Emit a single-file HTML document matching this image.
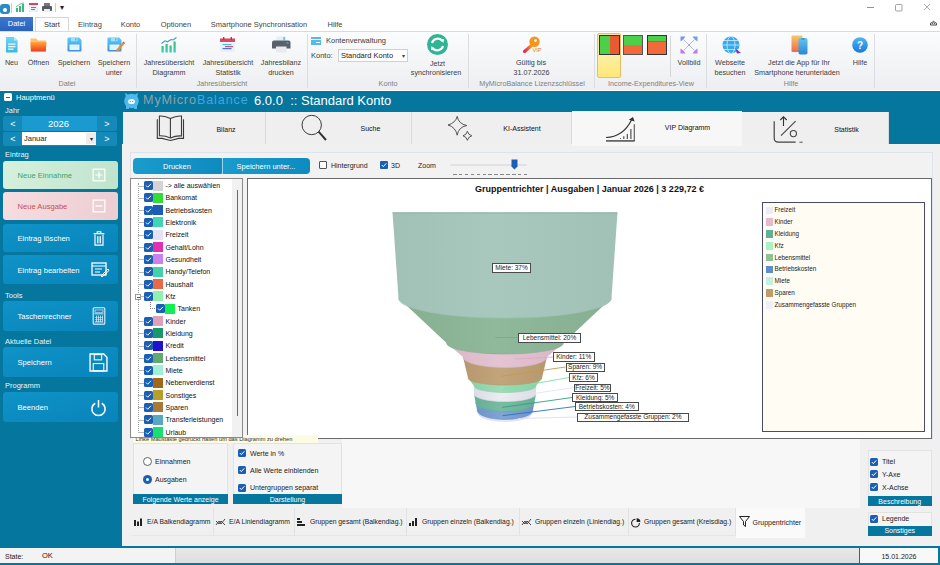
<!DOCTYPE html>
<html><head><meta charset="utf-8">
<style>
html,body{margin:0;padding:0;}
body{width:940px;height:565px;overflow:hidden;position:relative;background:#fff;font-family:"Liberation Sans",sans-serif;}
.t{position:absolute;white-space:nowrap;}
.r{position:absolute;box-sizing:border-box;}
svg.r{overflow:visible;}
</style></head><body>
<div class="r" style="left:0px;top:0px;width:940px;height:31px;background:#fff;"></div>
<svg class="r" style="left:0px;top:2px;" width="12" height="13" viewBox="0 0 12 13"><rect x="0" y="2" width="10" height="10" rx="3" fill="#2a8cc0"/><circle cx="5" cy="8" r="2" fill="#fff"/></svg>
<div class="r" style="left:11px;top:3px;width:1px;height:10px;background:#ccc;"></div>
<svg class="r" style="left:16px;top:3px;" width="9" height="9" viewBox="0 0 9 9"><rect x="0" y="5" width="2" height="4" fill="#3cb87a"/><rect x="3" y="3" width="2" height="6" fill="#3cb87a"/><rect x="6" y="1" width="2" height="8" fill="#3cb87a"/><path d="M0 4 L4 1 L8 0" stroke="#3cb87a" fill="none" stroke-width="0.8"/></svg>
<svg class="r" style="left:29px;top:3px;" width="9" height="9" viewBox="0 0 9 9"><rect x="0" y="1" width="9" height="8" fill="#e8f0fa"/><rect x="0" y="0" width="9" height="2" fill="#e04060"/><rect x="2" y="4" width="5" height="1" fill="#5080e0"/><rect x="2" y="6" width="4" height="1" fill="#e05080"/></svg>
<svg class="r" style="left:42px;top:3px;" width="10" height="9" viewBox="0 0 10 9"><rect x="0" y="3" width="10" height="5" rx="1" fill="#555a66"/><rect x="2" y="0" width="6" height="3" fill="#777"/><rect x="2" y="6" width="6" height="3" fill="#eee"/></svg>
<div class="r" style="left:55px;top:3px;width:1px;height:9px;background:#ccc;"></div>
<div class="t" style="left:60px;top:4.16px;font-size:8px;line-height:8px;color:#222;">▾</div>
<svg class="r" style="left:866px;top:3px;" width="70" height="9" viewBox="0 0 70 9"><path d="M1 4.5 H8" stroke="#888" stroke-width="0.9"/><rect x="29.5" y="1.5" width="6.5" height="6.5" rx="1" fill="none" stroke="#999" stroke-width="0.9"/><path d="M58 1 L64 7 M64 1 L58 7" stroke="#aaa" stroke-width="0.9"/></svg>
<div class="r" style="left:0px;top:17px;width:33px;height:14px;background:linear-gradient(#3a78d0,#2a62bc);"></div>
<div class="t" style="left:-3.5px;width:40px;text-align:center;top:20.40px;font-size:7.5px;line-height:7.5px;color:#fff;">Datei</div>
<div class="r" style="left:35px;top:17px;width:34px;height:15px;background:#fff;border:1px solid #d6d6d6;border-bottom:none;box-sizing:border-box;"></div>
<div class="t" style="left:32.0px;width:40px;text-align:center;top:20.90px;font-size:7.5px;line-height:7.5px;color:#333;">Start</div>
<div class="t" style="left:-10.0px;width:200px;text-align:center;top:20.90px;font-size:7.5px;line-height:7.5px;color:#444;">Eintrag</div>
<div class="t" style="left:30.5px;width:200px;text-align:center;top:20.90px;font-size:7.5px;line-height:7.5px;color:#444;">Konto</div>
<div class="t" style="left:76.0px;width:200px;text-align:center;top:20.90px;font-size:7.5px;line-height:7.5px;color:#444;">Optionen</div>
<div class="t" style="left:159.0px;width:200px;text-align:center;top:20.90px;font-size:7.5px;line-height:7.5px;color:#444;">Smartphone Synchronisation</div>
<div class="t" style="left:235.0px;width:200px;text-align:center;top:20.90px;font-size:7.5px;line-height:7.5px;color:#444;">Hilfe</div>
<svg class="r" style="left:930px;top:20px;" width="7" height="6" viewBox="0 0 7 6"><path d="M0.5 5 Q0 2.5 2 2.5 Q3.5 0 5 2.5 Q7 2.5 6.5 5 Z" fill="none" stroke="#333" stroke-width="0.9"/><path d="M2 4 L3.5 2.7 L5 4" stroke="#333" stroke-width="0.8" fill="none"/></svg>
<div class="r" style="left:0px;top:31px;width:940px;height:59px;background:linear-gradient(#fbfcfd,#eceef1);border-top:1px solid #d8dadd;box-sizing:border-box;"></div>
<div class="r" style="left:136px;top:34px;width:1px;height:54px;background:#dcdde0;"></div>
<div class="r" style="left:307px;top:34px;width:1px;height:54px;background:#dcdde0;"></div>
<div class="r" style="left:468px;top:34px;width:1px;height:54px;background:#dcdde0;"></div>
<div class="r" style="left:594px;top:34px;width:1px;height:54px;background:#dcdde0;"></div>
<div class="r" style="left:706px;top:34px;width:1px;height:54px;background:#dcdde0;"></div>
<div class="r" style="left:874px;top:34px;width:1px;height:54px;background:#dcdde0;"></div>
<svg class="r" style="left:5px;top:36.5px;" width="13" height="16" viewBox="0 0 13 16"><defs><linearGradient id="gneu" x1="0" x2="0" y1="0" y2="1"><stop offset="0" stop-color="#6fd6f4"/><stop offset="1" stop-color="#3cb4e6"/></linearGradient></defs><path d="M1 0 H9 L12.5 3.5 V15.5 H1 Z" fill="url(#gneu)"/><path d="M9 0 V3.5 H12.5" fill="#b8ecfb"/><rect x="3" y="6.5" width="7.5" height="1.3" fill="#e6f8fe"/><rect x="3" y="9" width="7.5" height="1.3" fill="#e6f8fe"/><rect x="3" y="11.5" width="5.5" height="1.3" fill="#e6f8fe"/></svg>
<div class="t" style="left:-88.5px;width:200px;text-align:center;top:59.04px;font-size:7.2px;line-height:7.2px;color:#3c3c3c;">Neu</div>
<svg class="r" style="left:29.5px;top:37.5px;" width="17" height="14" viewBox="0 0 17 14"><defs><linearGradient id="gfold" x1="0" x2="0" y1="0" y2="1"><stop offset="0" stop-color="#ffa838"/><stop offset="1" stop-color="#ee3c1c"/></linearGradient></defs><path d="M0.5 0.5 H6 L8 2.5 H16 V13.5 H0.5 Z" fill="#ffc070"/><path d="M0.5 4 H16.5 L15.8 13.5 H1 Z" fill="url(#gfold)"/></svg>
<div class="t" style="left:-61.5px;width:200px;text-align:center;top:59.04px;font-size:7.2px;line-height:7.2px;color:#3c3c3c;">Öffnen</div>
<svg class="r" style="left:66.5px;top:37px;" width="15" height="15" viewBox="0 0 15 15"><defs><linearGradient id="gdisk" x1="0" x2="0" y1="0" y2="1"><stop offset="0" stop-color="#5ccdf2"/><stop offset="1" stop-color="#3f8ee0"/></linearGradient></defs><path d="M0.5 1.5 Q0.5 0.5 1.5 0.5 H12 L14.5 3 V13.5 Q14.5 14.5 13.5 14.5 H1.5 Q0.5 14.5 0.5 13.5 Z" fill="url(#gdisk)"/><rect x="4" y="0.5" width="6.5" height="3.8" fill="#9fe2f8"/><rect x="8" y="1.2" width="1.4" height="2.4" fill="#4fb8e8"/><rect x="2.5" y="7.5" width="10" height="5.5" fill="#dff4fc"/></svg>
<div class="t" style="left:-26.0px;width:200px;text-align:center;top:59.04px;font-size:7.2px;line-height:7.2px;color:#3c3c3c;">Speichern</div>
<svg class="r" style="left:106.5px;top:37px;" width="18" height="15" viewBox="0 0 18 15"><defs><linearGradient id="gdisk2" x1="0" x2="0" y1="0" y2="1"><stop offset="0" stop-color="#5ccdf2"/><stop offset="1" stop-color="#3f8ee0"/></linearGradient></defs><path d="M0.5 1.5 Q0.5 0.5 1.5 0.5 H12 L14.5 3 V13.5 Q14.5 14.5 13.5 14.5 H1.5 Q0.5 14.5 0.5 13.5 Z" fill="url(#gdisk2)"/><rect x="4" y="0.5" width="6.5" height="3.8" fill="#9fe2f8"/><rect x="8" y="1.2" width="1.4" height="2.4" fill="#4fb8e8"/><rect x="2.5" y="7.5" width="10" height="5.5" fill="#dff4fc"/><path d="M9.5 12.5 L15.5 5.5 L17.3 7 L11.3 14 L9.2 14.6 Z" fill="#f08a30"/><path d="M15.5 5.5 L16.3 4.6 L18 6.1 L17.3 7 Z" fill="#e03a50"/></svg>
<div class="t" style="left:14.0px;width:200px;text-align:center;top:59.04px;font-size:7.2px;line-height:7.2px;color:#3c3c3c;">Speichern</div>
<div class="t" style="left:14.0px;width:200px;text-align:center;top:68.54px;font-size:7.2px;line-height:7.2px;color:#3c3c3c;">unter</div>
<div class="t" style="left:-33.0px;width:200px;text-align:center;top:79.54px;font-size:7.2px;line-height:7.2px;color:#7c7f84;">Datei</div>
<svg class="r" style="left:160.5px;top:36.5px;" width="16" height="16" viewBox="0 0 16 16"><defs><linearGradient id="gbar" x1="0" x2="0" y1="0" y2="1"><stop offset="0" stop-color="#3cc07a"/><stop offset="1" stop-color="#34c8c0"/></linearGradient></defs><rect x="0.5" y="9" width="2.2" height="6.5" fill="url(#gbar)"/><rect x="4.5" y="7" width="2.2" height="8.5" fill="url(#gbar)"/><rect x="8.5" y="8.5" width="2.2" height="7" fill="url(#gbar)"/><rect x="12.5" y="4.5" width="2.2" height="11" fill="url(#gbar)"/><path d="M0.5 6.5 L4 3.8 L6.5 4.8 L10 2.5 L12 3 L15.5 0.5" stroke="#3a9ad0" stroke-width="1.1" fill="none"/></svg>
<div class="t" style="left:69.0px;width:200px;text-align:center;top:59.04px;font-size:7.2px;line-height:7.2px;color:#3c3c3c;">Jahresübersicht</div>
<div class="t" style="left:69.0px;width:200px;text-align:center;top:68.54px;font-size:7.2px;line-height:7.2px;color:#3c3c3c;">Diagramm</div>
<svg class="r" style="left:220px;top:36.5px;" width="15" height="15" viewBox="0 0 15 15"><rect x="0" y="1.5" width="15" height="13.5" fill="#e6f3fb"/><rect x="0" y="1.5" width="15" height="3.5" fill="#e0465e"/><rect x="3" y="0" width="1.4" height="2.8" fill="#b83048"/><rect x="10.6" y="0" width="1.4" height="2.8" fill="#b83048"/><rect x="2.5" y="7" width="9" height="1.2" fill="#48c0e8"/><rect x="5" y="9" width="8" height="1.2" fill="#e05070"/><rect x="2.5" y="11" width="9" height="1.2" fill="#5070e0"/></svg>
<div class="t" style="left:128.0px;width:200px;text-align:center;top:59.04px;font-size:7.2px;line-height:7.2px;color:#3c3c3c;">Jahresübersicht</div>
<div class="t" style="left:128.0px;width:200px;text-align:center;top:68.54px;font-size:7.2px;line-height:7.2px;color:#3c3c3c;">Statistik</div>
<svg class="r" style="left:272px;top:36px;" width="18.5" height="17" viewBox="0 0 18.5 17"><rect x="4.5" y="0.5" width="9.5" height="5" fill="#dff0f8"/><rect x="11.5" y="1" width="1.2" height="3" fill="#40b0d0"/><path d="M0 6.5 Q0 4.5 2 4.5 H16.5 Q18.5 4.5 18.5 6.5 V12.5 H0 Z" fill="#5c606c"/><rect x="14.5" y="6.5" width="2" height="1" fill="#50c0e0"/><rect x="4" y="10.5" width="10.5" height="6" fill="#e8eaee"/></svg>
<div class="t" style="left:181.0px;width:200px;text-align:center;top:59.04px;font-size:7.2px;line-height:7.2px;color:#3c3c3c;">Jahresbilanz</div>
<div class="t" style="left:181.0px;width:200px;text-align:center;top:68.54px;font-size:7.2px;line-height:7.2px;color:#3c3c3c;">drucken</div>
<div class="t" style="left:122.0px;width:200px;text-align:center;top:79.54px;font-size:7.2px;line-height:7.2px;color:#7c7f84;">Jahresübersicht</div>
<svg class="r" style="left:311px;top:37px;" width="10" height="8" viewBox="0 0 10 8"><rect x="0" y="0" width="10" height="8" fill="#5ab8e8"/><rect x="0" y="2" width="10" height="1" fill="#fff"/><rect x="5" y="5" width="4" height="1" fill="#fff"/></svg>
<div class="t" style="left:326px;top:37.40px;font-size:7.5px;line-height:7.5px;color:#3c3c3c;">Kontenverwaltung</div>
<div class="t" style="left:311px;top:51.90px;font-size:7.5px;line-height:7.5px;color:#3c3c3c;">Konto:</div>
<div class="r" style="left:338px;top:49px;width:70px;height:13px;background:#fff;border:1px solid #d0d0d0;box-sizing:border-box;"></div>
<div class="t" style="left:341px;top:51.90px;font-size:7.5px;line-height:7.5px;color:#222;">Standard Konto</div>
<div class="t" style="left:398.0px;width:10px;text-align:center;top:52.62px;font-size:6px;line-height:6px;color:#444;">▾</div>
<svg class="r" style="left:427px;top:34px;" width="21" height="21" viewBox="0 0 21 21"><circle cx="10.5" cy="10.5" r="10.5" fill="#2fb594"/><path d="M5 9 A6 6 0 0 1 15.5 7" stroke="#fff" stroke-width="2.2" fill="none"/><path d="M16 12 A6 6 0 0 1 5.5 14" stroke="#fff" stroke-width="2.2" fill="none"/><path d="M13 5 L17 5 L16.5 9 Z" fill="#fff"/><path d="M8 16 L4 16 L4.5 12 Z" fill="#fff"/></svg>
<div class="t" style="left:337.5px;width:200px;text-align:center;top:59.54px;font-size:7.2px;line-height:7.2px;color:#3c3c3c;">Jetzt</div>
<div class="t" style="left:336.0px;width:200px;text-align:center;top:69.04px;font-size:7.2px;line-height:7.2px;color:#3c3c3c;">synchronisieren</div>
<div class="t" style="left:288.0px;width:200px;text-align:center;top:79.54px;font-size:7.2px;line-height:7.2px;color:#7c7f84;">Konto</div>
<svg class="r" style="left:521px;top:36px;" width="20" height="17" viewBox="0 0 20 17"><defs><linearGradient id="gkey" x1="1" x2="0" y1="0" y2="1"><stop offset="0" stop-color="#f8a020"/><stop offset="1" stop-color="#e8204a"/></linearGradient></defs><path d="M11 9 L3.5 15.5" stroke="url(#gkey)" stroke-width="3" stroke-linecap="round"/><circle cx="13.5" cy="5.8" r="5.2" fill="#f7941e"/><circle cx="14.5" cy="4.6" r="1.4" fill="#fff4d8"/><text x="11.5" y="16" font-size="5.5" fill="#d07a40" font-family="Liberation Sans">VIP</text></svg>
<div class="t" style="left:431.0px;width:200px;text-align:center;top:59.04px;font-size:7.2px;line-height:7.2px;color:#3c3c3c;">Gültig bis</div>
<div class="t" style="left:431.5px;width:200px;text-align:center;top:68.54px;font-size:7.2px;line-height:7.2px;color:#3c3c3c;">31.07.2026</div>
<div class="t" style="left:432.0px;width:200px;text-align:center;top:79.54px;font-size:7.2px;line-height:7.2px;color:#7c7f84;">MyMicroBalance Lizenzschlüssel</div>
<div class="r" style="left:597px;top:33px;width:24px;height:45px;background:linear-gradient(#fbe7a0,#fdeea8 45%,#ffe878);border:1px solid #e6c060;border-radius:2px;box-sizing:border-box;"></div>
<svg class="r" style="left:599px;top:35px;" width="21" height="20" viewBox="0 0 21 20"><rect x="0" y="0" width="21" height="20" fill="#333"/><rect x="1" y="1" width="10" height="18" fill="#4cd04a"/><rect x="11" y="1" width="9" height="18" fill="#e85a30"/></svg>
<svg class="r" style="left:623px;top:35px;" width="20" height="20" viewBox="0 0 20 20"><rect x="0" y="0" width="20" height="20" fill="#555"/><rect x="1" y="1" width="18" height="9" fill="#4cd04a"/><rect x="1" y="10" width="18" height="9" fill="#f26a3a"/></svg>
<svg class="r" style="left:647px;top:35px;" width="20" height="20" viewBox="0 0 20 20"><rect x="0" y="0" width="20" height="20" fill="#333"/><rect x="1" y="1" width="18" height="5.5" fill="#4cd04a"/><rect x="1" y="6.5" width="18" height="12.5" fill="#f26a3a"/></svg>
<div class="r" style="left:670px;top:36px;width:1px;height:41px;background:#d4d6da;"></div>
<svg class="r" style="left:680px;top:36px;" width="18" height="18" viewBox="0 0 18 18"><path d="M3.5 3.5 L14.5 14.5 M14.5 3.5 L3.5 14.5" stroke="#a8a8e8" stroke-width="0.8"/><circle cx="9" cy="9" r="0.9" fill="#a0a0e0"/><path d="M0.5 0.5 H5.5 L4 2.5 L2.5 4 L0.5 5.5 Z" fill="#7a98e6"/><path d="M17.5 0.5 H12.5 L14 2.5 L15.5 4 L17.5 5.5 Z" fill="#7a98e6"/><path d="M0.5 17.5 H5.5 L4 15.5 L2.5 14 L0.5 12.5 Z" fill="#c078e6"/><path d="M17.5 17.5 H12.5 L14 15.5 L15.5 14 L17.5 12.5 Z" fill="#c078e6"/></svg>
<div class="t" style="left:589.0px;width:200px;text-align:center;top:59.04px;font-size:7.2px;line-height:7.2px;color:#3c3c3c;">Vollbild</div>
<div class="t" style="left:551.0px;width:200px;text-align:center;top:79.54px;font-size:7.2px;line-height:7.2px;color:#7c7f84;">Income-Expenditures-View</div>
<svg class="r" style="left:722px;top:36px;" width="19" height="18" viewBox="0 0 19 18"><circle cx="9" cy="9" r="8.5" fill="#3aa8e8"/><ellipse cx="9" cy="9" rx="4" ry="8.5" fill="none" stroke="#bfe6fb" stroke-width="0.9"/><path d="M0.5 9 H17.5 M2 4.5 H16 M2 13.5 H16" stroke="#bfe6fb" stroke-width="0.9"/><path d="M13 12 L19 17 L15 17.5 Z" fill="#6a3ac8"/></svg>
<div class="t" style="left:630.0px;width:200px;text-align:center;top:59.04px;font-size:7.2px;line-height:7.2px;color:#3c3c3c;">Webseite</div>
<div class="t" style="left:630.0px;width:200px;text-align:center;top:68.54px;font-size:7.2px;line-height:7.2px;color:#3c3c3c;">besuchen</div>
<svg class="r" style="left:791px;top:35px;" width="17" height="20" viewBox="0 0 17 20"><defs><linearGradient id="gph1" x1="0" x2="0" y1="0" y2="1"><stop offset="0" stop-color="#f8c868"/><stop offset="1" stop-color="#ef6a4a"/></linearGradient><linearGradient id="gph2" x1="0" x2="0" y1="0" y2="1"><stop offset="0" stop-color="#62c6f2"/><stop offset="1" stop-color="#2a86d6"/></linearGradient></defs><rect x="0.5" y="0.5" width="11" height="16.5" rx="1" fill="url(#gph1)"/><rect x="7.5" y="3" width="9" height="16.5" rx="1.8" fill="url(#gph2)"/><rect x="10.5" y="3.6" width="3" height="0.8" fill="#1a5aa0"/></svg>
<div class="t" style="left:699.0px;width:200px;text-align:center;top:59.04px;font-size:7.2px;line-height:7.2px;color:#3c3c3c;">Jetzt die App für Ihr</div>
<div class="t" style="left:697.0px;width:200px;text-align:center;top:68.54px;font-size:7.2px;line-height:7.2px;color:#3c3c3c;">Smartphone herunterladen</div>
<svg class="r" style="left:852px;top:37px;" width="16" height="16" viewBox="0 0 16 16"><defs><linearGradient id="ghelp" x1="0" x2="0" y1="0" y2="1"><stop offset="0" stop-color="#4ab8f4"/><stop offset="1" stop-color="#1a7ad8"/></linearGradient></defs><circle cx="8" cy="8" r="7.8" fill="url(#ghelp)"/><text x="8" y="11.8" font-size="10" fill="#fff" text-anchor="middle" font-family="Liberation Sans" font-weight="bold">?</text></svg>
<div class="t" style="left:760.0px;width:200px;text-align:center;top:59.04px;font-size:7.2px;line-height:7.2px;color:#3c3c3c;">Hilfe</div>
<div class="t" style="left:691.0px;width:200px;text-align:center;top:79.54px;font-size:7.2px;line-height:7.2px;color:#7c7f84;">Hilfe</div>
<div class="r" style="left:0px;top:90.5px;width:940px;height:456.5px;background:#05769e;"></div>
<div class="r" style="left:4px;top:93px;width:8px;height:8px;background:#fff;border-radius:1.5px;"></div>
<div class="r" style="left:6px;top:96.5px;width:4px;height:1px;background:#0e7397;"></div>
<div class="t" style="left:16px;top:93.90px;font-size:7.5px;line-height:7.5px;color:#fff;">Hauptmenü</div>
<div class="t" style="left:5px;top:106.90px;font-size:7.5px;line-height:7.5px;color:#e8f4f8;">Jahr</div>
<div class="r" style="left:3px;top:116px;width:114px;height:15px;background:#1589b7;border-radius:2px;"></div>
<div class="r" style="left:22px;top:116px;width:75px;height:15px;background:#1a9ad0;"></div>
<div class="t" style="left:3.0px;width:20px;text-align:center;top:119.68px;font-size:9px;line-height:9px;color:#fff;">&lt;</div>
<div class="t" style="left:97.0px;width:20px;text-align:center;top:119.68px;font-size:9px;line-height:9px;color:#fff;">&gt;</div>
<div class="t" style="left:28.5px;width:60px;text-align:center;top:119.44px;font-size:9.5px;line-height:9.5px;color:#fff;">2026</div>
<div class="r" style="left:3px;top:132px;width:114px;height:13.5px;background:#1589b7;border-radius:2px;"></div>
<div class="r" style="left:21.5px;top:132px;width:74.5px;height:13px;background:#fff;"></div>
<div class="r" style="left:86px;top:133px;width:10px;height:11px;background:#ececec;"></div>
<div class="t" style="left:86.0px;width:10px;text-align:center;top:136.12px;font-size:6px;line-height:6px;color:#222;">▾</div>
<div class="t" style="left:24px;top:135.40px;font-size:7.5px;line-height:7.5px;color:#222;">Januar</div>
<div class="t" style="left:3.0px;width:20px;text-align:center;top:135.18px;font-size:9px;line-height:9px;color:#fff;">&lt;</div>
<div class="t" style="left:97.0px;width:20px;text-align:center;top:135.18px;font-size:9px;line-height:9px;color:#fff;">&gt;</div>
<div class="t" style="left:5px;top:151.40px;font-size:7.5px;line-height:7.5px;color:#e8f4f8;">Eintrag</div>
<div class="r" style="left:3px;top:161px;width:114.5px;height:28px;background:linear-gradient(100deg,#d6f1de,#bfe3cc);border-radius:3px;"></div>
<div class="t" style="left:17.5px;top:172.35px;font-size:7.6px;line-height:7.6px;color:#3fa35e;">Neue Einnahme</div>
<svg class="r" style="left:91.5px;top:168.0px;" width="14" height="14" viewBox="0 0 18 18"><rect x="1.5" y="1.5" width="15" height="15" fill="none" stroke="#fff" stroke-width="1.6"/><path d="M9 4.5 V13.5 M4.5 9 H13.5" stroke="#fff" stroke-width="1.6"/></svg>
<div class="r" style="left:3px;top:192px;width:114.5px;height:28px;background:linear-gradient(100deg,#f6dde0,#eccdd1);border-radius:3px;"></div>
<div class="t" style="left:17.5px;top:203.35px;font-size:7.6px;line-height:7.6px;color:#c8504e;">Neue Ausgabe</div>
<svg class="r" style="left:91.5px;top:199.0px;" width="14" height="14" viewBox="0 0 18 18"><rect x="1.5" y="1.5" width="15" height="15" fill="none" stroke="#fff" stroke-width="1.6"/><path d="M4.5 9 H13.5" stroke="#fff" stroke-width="1.6"/></svg>
<div class="r" style="left:3px;top:224px;width:114.5px;height:28px;background:linear-gradient(165deg,#0f93c8,#0884b9);border-radius:3px;"></div>
<div class="t" style="left:17.5px;top:235.35px;font-size:7.6px;line-height:7.6px;color:#fff;">Eintrag löschen</div>
<svg class="r" style="left:90.5px;top:230.0px;" width="16" height="16" viewBox="0 0 18 18"><path d="M3 4 H15 M7 4 V2 H11 V4" stroke="#fff" stroke-width="1.3" fill="none"/><path d="M4.5 5 V17 H13.5 V5" stroke="#fff" stroke-width="1.3" fill="none"/><path d="M7.3 7 V15 M9 7 V15 M10.7 7 V15" stroke="#fff" stroke-width="1"/></svg>
<div class="r" style="left:3px;top:255px;width:114.5px;height:28.5px;background:linear-gradient(165deg,#0f93c8,#0884b9);border-radius:3px;"></div>
<div class="t" style="left:17.5px;top:266.60px;font-size:7.6px;line-height:7.6px;color:#fff;">Eintrag bearbeiten</div>
<svg class="r" style="left:90.5px;top:260.25px;" width="18" height="18" viewBox="0 0 18 18"><rect x="1" y="3" width="14" height="12" fill="none" stroke="#fff" stroke-width="1.3"/><path d="M1 6 H15 M4 9 H11 M4 12 H9" stroke="#fff" stroke-width="1"/><path d="M10 16 L17 9 L18 10.5 L11 17 Z" fill="none" stroke="#fff" stroke-width="1"/></svg>
<div class="t" style="left:5px;top:291.90px;font-size:7.5px;line-height:7.5px;color:#e8f4f8;">Tools</div>
<div class="r" style="left:3px;top:301px;width:114.5px;height:30px;background:linear-gradient(165deg,#0f93c8,#0884b9);border-radius:3px;"></div>
<div class="t" style="left:17.5px;top:313.35px;font-size:7.6px;line-height:7.6px;color:#fff;">Taschenrechner</div>
<svg class="r" style="left:89.5px;top:307.0px;" width="18" height="18" viewBox="0 0 18 18"><rect x="3.2" y="0.8" width="11.6" height="16.4" rx="1" fill="none" stroke="#dff4fb" stroke-width="1.1"/><rect x="5" y="3" width="8" height="2.2" fill="#0a6ea0" stroke="#dff4fb" stroke-width="0.7"/><path d="M4.5 6.8 H13.5" stroke="#dff4fb" stroke-width="0.9"/><path d="M6.5 8.5 V15 M8.5 8.5 V15 M10.5 8.5 V15 M12.5 8.5 V15" stroke="#cdebf6" stroke-width="0.9" opacity="0.9"/><path d="M5 10.5 H13 M5 12.5 H13 M5 14.5 H13" stroke="#cdebf6" stroke-width="0.7" opacity="0.8"/><path d="M4.5 15.8 H13.5" stroke="#dff4fb" stroke-width="0.6"/></svg>
<div class="t" style="left:5px;top:337.90px;font-size:7.5px;line-height:7.5px;color:#e8f4f8;">Aktuelle Datei</div>
<div class="r" style="left:3px;top:347px;width:114.5px;height:30px;background:linear-gradient(165deg,#0f93c8,#0884b9);border-radius:3px;"></div>
<div class="t" style="left:17.5px;top:359.35px;font-size:7.6px;line-height:7.6px;color:#fff;">Speichern</div>
<svg class="r" style="left:89.0px;top:352.5px;" width="19" height="19" viewBox="0 0 18 18"><path d="M1 1 H14 L17 4 V17 H1 Z" fill="none" stroke="#fff" stroke-width="1.3"/><rect x="5" y="1.5" width="7" height="5" fill="none" stroke="#fff" stroke-width="1"/><rect x="4" y="10" width="10" height="7" fill="none" stroke="#fff" stroke-width="1"/></svg>
<div class="t" style="left:5px;top:382.40px;font-size:7.5px;line-height:7.5px;color:#e8f4f8;">Programm</div>
<div class="r" style="left:3px;top:392px;width:114.5px;height:30px;background:linear-gradient(165deg,#0f93c8,#0884b9);border-radius:3px;"></div>
<div class="t" style="left:17.5px;top:404.35px;font-size:7.6px;line-height:7.6px;color:#fff;">Beenden</div>
<svg class="r" style="left:90.0px;top:398.5px;" width="17" height="17" viewBox="0 0 18 18"><path d="M5.5 4.5 A7 7 0 1 0 12.5 4.5" stroke="#fff" stroke-width="1.6" fill="none"/><path d="M9 1 V9" stroke="#fff" stroke-width="1.6"/></svg>
<svg class="r" style="left:123px;top:92px;" width="17" height="17" viewBox="0 0 17 17"><circle cx="8.5" cy="9" r="7.3" fill="#4fb8ec"/><path d="M2 1 L6 3 L3 6 Z M15 1 L11 3 L14 6 Z" fill="#4fb8ec"/><rect x="3" y="13" width="3" height="4" fill="#4fb8ec"/><rect x="11" y="13" width="3" height="4" fill="#4fb8ec"/><ellipse cx="8.5" cy="9.5" rx="3.4" ry="2.6" fill="#fff"/><circle cx="7.3" cy="9.5" r="0.7" fill="#4fb8ec"/><circle cx="9.7" cy="9.5" r="0.7" fill="#4fb8ec"/></svg>
<div class="t" style="left:143px;top:93px;font-size:12.6px;line-height:14px;letter-spacing:0.9px;"><span style="color:#8ea3ab">MyMicro</span><span style="color:#3aa9e0">Balance</span></div>
<div class="t" style="left:254px;top:94.26px;font-size:13px;line-height:13px;color:#fff;">6.0.0&nbsp; :: Standard Konto</div>
<div class="r" style="left:122px;top:144px;width:818px;height:401.5px;background:#f0f0f0;"></div>
<div class="r" style="left:123px;top:112px;width:143px;height:32px;background:#efefef;border-right:1px solid #dadada;"></div>
<div class="r" style="left:266px;top:112px;width:146px;height:32px;background:#efefef;border-right:1px solid #dadada;"></div>
<div class="r" style="left:412px;top:112px;width:160px;height:32px;background:#efefef;border-right:1px solid #dadada;"></div>
<div class="r" style="left:572px;top:110.5px;width:170px;height:35px;background:#f7f7f7;"></div>
<div class="r" style="left:742px;top:112px;width:147px;height:32px;background:#efefef;border-right:1px solid #dadada;"></div>
<svg class="r" style="left:150px;top:110px;" width="45" height="36" viewBox="0 0 45 36"><path d="M9.4 6 Q15 5.5 20.4 8.5 Q26 5.5 31.5 6 V26 Q26 25.5 20.4 28 Q15 25.5 9.4 25.8 Z" fill="none" stroke="#3a3a3a" stroke-width="1.1"/><path d="M20.4 8.5 V28" stroke="#3a3a3a" stroke-width="1.1"/><path d="M7.3 9.2 V28.4 H12 L20.4 30.5 L28.8 28.4 H33.5 V9.2" fill="none" stroke="#3a3a3a" stroke-width="1.1"/></svg>
<div class="t" style="left:186.0px;width:80px;text-align:center;top:125.64px;font-size:7px;line-height:7px;color:#111;">Bilanz</div>
<svg class="r" style="left:300px;top:114px;" width="28" height="28" viewBox="0 0 28 28"><circle cx="11.7" cy="11" r="9.7" fill="none" stroke="#3a3a3a" stroke-width="1"/><path d="M18.6 17.6 L26 26" stroke="#333" stroke-width="2"/></svg>
<div class="t" style="left:330.5px;width:80px;text-align:center;top:125.14px;font-size:7px;line-height:7px;color:#111;">Suche</div>
<svg class="r" style="left:440px;top:110px;" width="40" height="36" viewBox="0 0 40 36"><path d="M17.2 6.4 Q18.5 14 26.8 15.5 Q18.5 17 17.2 25.2 Q15.5 17 8 15 Q15.5 13 17.2 6.4 Z" fill="none" stroke="#444" stroke-width="0.9"/><path d="M27.4 21.3 Q28.2 24.8 31.8 25.8 Q28.2 26.8 27.4 30.3 Q26.6 26.8 23 25.8 Q26.6 24.8 27.4 21.3 Z" fill="none" stroke="#444" stroke-width="0.9"/></svg>
<div class="t" style="left:482.0px;width:80px;text-align:center;top:125.14px;font-size:7px;line-height:7px;color:#111;">KI-Assistent</div>
<svg class="r" style="left:600px;top:110px;" width="40" height="36" viewBox="0 0 40 36"><path d="M6 30.9 H34.7" stroke="#555" stroke-width="1.6"/><path d="M34.3 14.3 V31" stroke="#555" stroke-width="1.1"/><path d="M30.9 19 V29 M27.3 24 V29 M23.8 26.3 V29" stroke="#444" stroke-width="1.1"/><circle cx="20.4" cy="28.5" r="0.55" fill="#444"/><path d="M6 27.5 Q23 27 31.5 10" stroke="#333" stroke-width="1.2" fill="none"/><path d="M28.8 9.8 L33 7 L34.6 11.6 Z" fill="#333"/></svg>
<div class="t" style="left:647.5px;width:80px;text-align:center;top:124.14px;font-size:7px;line-height:7px;color:#111;">VIP Diagramm</div>
<svg class="r" style="left:765px;top:110px;" width="40" height="36" viewBox="0 0 40 36"><path d="M9.2 11.2 V28 Q9.2 32.2 13.4 32.2 H30.6" stroke="#444" stroke-width="1.2" fill="none"/><path d="M34.4 32.2 H37.6" stroke="#555" stroke-width="1"/><path d="M18.5 6.8 V16 M15.3 10 L18.5 6.8 L21.7 10" stroke="#333" stroke-width="1.1" fill="none"/><path d="M16 25.7 L30.6 11.2" stroke="#444" stroke-width="1.1"/><circle cx="28.4" cy="23.6" r="3.1" fill="none" stroke="#444" stroke-width="1.1"/></svg>
<div class="t" style="left:806.5px;width:80px;text-align:center;top:125.64px;font-size:7px;line-height:7px;color:#111;">Statistik</div>
<div class="r" style="left:130px;top:151.5px;width:803px;height:287.5px;background:#f2f2f2;border-top:1.5px solid #dce3eb;border-left:1px solid #dde3ea;border-right:1px solid #dde3ea;"></div>
<div class="r" style="left:133px;top:158px;width:88.5px;height:16px;background:linear-gradient(100deg,#1a9ccd,#0d8bbf);border-radius:4px 1px 1px 4px;"></div>
<div class="r" style="left:222px;top:158px;width:88px;height:16px;background:linear-gradient(100deg,#1a9ccd,#0d8bbf);border-radius:1px 4px 4px 1px;"></div>
<div class="r" style="left:221.5px;top:158px;width:1px;height:16px;background:#9fd4ea;"></div>
<div class="t" style="left:133.0px;width:88px;text-align:center;top:162.80px;font-size:7.5px;line-height:7.5px;color:#fff;">Drucken</div>
<div class="t" style="left:222.0px;width:88px;text-align:center;top:162.80px;font-size:7.5px;line-height:7.5px;color:#fff;">Speichern unter...</div>
<div class="r" style="left:319px;top:161px;width:8px;height:8px;background:#fff;border:1px solid #555;border-radius:1px;"></div>
<div class="t" style="left:331px;top:161.64px;font-size:7px;line-height:7px;color:#222;">Hintergrund</div>
<div class="r" style="left:380px;top:161px;width:8px;height:8px;background:#1a5fb4;border-radius:1px;"></div>
<svg class="r" style="left:380px;top:161px;" width="8" height="8" viewBox="0 0 8 8"><path d="M1.8 4 L3.3 5.6 L6.3 2.3" stroke="#fff" stroke-width="1" fill="none"/></svg>
<div class="t" style="left:391px;top:161.64px;font-size:7px;line-height:7px;color:#222;">3D</div>
<div class="t" style="left:418px;top:162.14px;font-size:7px;line-height:7px;color:#222;">Zoom</div>
<div class="r" style="left:450px;top:163.5px;width:77px;height:2px;background:#e2e2e2;border-radius:1px;"></div>
<svg class="r" style="left:511px;top:159px;" width="7" height="11" viewBox="0 0 7 11"><path d="M0.5 0.5 H6.5 V7.5 L3.5 10.5 L0.5 7.5 Z" fill="#1a5fb4"/></svg>
<div class="r" style="left:453.0px;top:173.5px;width:3.5px;height:1px;background:#888;"></div>
<div class="r" style="left:458.9px;top:173.5px;width:3.5px;height:1px;background:#888;"></div>
<div class="r" style="left:464.8px;top:173.5px;width:3.5px;height:1px;background:#888;"></div>
<div class="r" style="left:470.7px;top:173.5px;width:3.5px;height:1px;background:#888;"></div>
<div class="r" style="left:476.6px;top:173.5px;width:3.5px;height:1px;background:#888;"></div>
<div class="r" style="left:482.5px;top:173.5px;width:3.5px;height:1px;background:#888;"></div>
<div class="r" style="left:488.4px;top:173.5px;width:3.5px;height:1px;background:#888;"></div>
<div class="r" style="left:494.3px;top:173.5px;width:3.5px;height:1px;background:#888;"></div>
<div class="r" style="left:500.2px;top:173.5px;width:3.5px;height:1px;background:#888;"></div>
<div class="r" style="left:506.1px;top:173.5px;width:3.5px;height:1px;background:#888;"></div>
<div class="r" style="left:512.0px;top:173.5px;width:3.5px;height:1px;background:#888;"></div>
<div class="r" style="left:517.9px;top:173.5px;width:3.5px;height:1px;background:#888;"></div>
<div class="r" style="left:523.8px;top:173.5px;width:3.5px;height:1px;background:#888;"></div>
<div style="position:absolute;left:0;top:0;width:0;height:0;z-index:3">
<div class="r" style="left:130px;top:178px;width:113px;height:260px;background:#fff;border:1px solid #8a8a8a;"></div>
<div class="r" style="left:232px;top:179px;width:10px;height:258px;background:#f1f1f1;"></div>
<div class="r" style="left:237px;top:189.5px;width:1.2px;height:226px;background:#6a6a6a;"></div>
<div class="r" style="left:137.5px;top:183px;width:0;height:250px;border-left:1px dotted #999;"></div>
<div class="r" style="left:138px;top:185.5px;width:6px;height:1px;background:#bbb;"></div>
<div class="r" style="left:144px;top:181.0px;width:9px;height:9px;background:#1a5fb4;border-radius:1.5px;"></div>
<svg class="r" style="left:144px;top:181.0px;" width="9" height="9" viewBox="0 0 9 9"><path d="M2 4.5 L3.7 6.2 L7 2.8" stroke="#fff" stroke-width="1" fill="none"/></svg>
<div class="r" style="left:152.5px;top:180.5px;width:10px;height:10px;background:#d4d4d4;"></div>
<div class="t" style="left:165.5px;top:182.14px;font-size:7px;line-height:7px;color:#111;">-&gt; alle auswählen</div>
<div class="r" style="left:138px;top:197.83px;width:6px;height:1px;background:#bbb;"></div>
<div class="r" style="left:144px;top:193.33px;width:9px;height:9px;background:#1a5fb4;border-radius:1.5px;"></div>
<svg class="r" style="left:144px;top:193.33px;" width="9" height="9" viewBox="0 0 9 9"><path d="M2 4.5 L3.7 6.2 L7 2.8" stroke="#fff" stroke-width="1" fill="none"/></svg>
<div class="r" style="left:152.5px;top:192.83px;width:10px;height:10px;background:#33dd33;"></div>
<div class="t" style="left:165.5px;top:194.47px;font-size:7px;line-height:7px;color:#111;">Bankomat</div>
<div class="r" style="left:138px;top:210.16px;width:6px;height:1px;background:#bbb;"></div>
<div class="r" style="left:144px;top:205.66px;width:9px;height:9px;background:#1a5fb4;border-radius:1.5px;"></div>
<svg class="r" style="left:144px;top:205.66px;" width="9" height="9" viewBox="0 0 9 9"><path d="M2 4.5 L3.7 6.2 L7 2.8" stroke="#fff" stroke-width="1" fill="none"/></svg>
<div class="r" style="left:152.5px;top:205.16px;width:10px;height:10px;background:#1a5cb8;"></div>
<div class="t" style="left:165.5px;top:206.80px;font-size:7px;line-height:7px;color:#111;">Betriebskosten</div>
<div class="r" style="left:138px;top:222.49px;width:6px;height:1px;background:#bbb;"></div>
<div class="r" style="left:144px;top:217.99px;width:9px;height:9px;background:#1a5fb4;border-radius:1.5px;"></div>
<svg class="r" style="left:144px;top:217.99px;" width="9" height="9" viewBox="0 0 9 9"><path d="M2 4.5 L3.7 6.2 L7 2.8" stroke="#fff" stroke-width="1" fill="none"/></svg>
<div class="r" style="left:152.5px;top:217.49px;width:10px;height:10px;background:#40d6b4;"></div>
<div class="t" style="left:165.5px;top:219.13px;font-size:7px;line-height:7px;color:#111;">Elektronik</div>
<div class="r" style="left:138px;top:234.82px;width:6px;height:1px;background:#bbb;"></div>
<div class="r" style="left:144px;top:230.32px;width:9px;height:9px;background:#1a5fb4;border-radius:1.5px;"></div>
<svg class="r" style="left:144px;top:230.32px;" width="9" height="9" viewBox="0 0 9 9"><path d="M2 4.5 L3.7 6.2 L7 2.8" stroke="#fff" stroke-width="1" fill="none"/></svg>
<div class="r" style="left:152.5px;top:229.82px;width:10px;height:10px;background:#e6e2f6;"></div>
<div class="t" style="left:165.5px;top:231.46px;font-size:7px;line-height:7px;color:#111;">Freizeit</div>
<div class="r" style="left:138px;top:247.15px;width:6px;height:1px;background:#bbb;"></div>
<div class="r" style="left:144px;top:242.65px;width:9px;height:9px;background:#1a5fb4;border-radius:1.5px;"></div>
<svg class="r" style="left:144px;top:242.65px;" width="9" height="9" viewBox="0 0 9 9"><path d="M2 4.5 L3.7 6.2 L7 2.8" stroke="#fff" stroke-width="1" fill="none"/></svg>
<div class="r" style="left:152.5px;top:242.15px;width:10px;height:10px;background:#e030b0;"></div>
<div class="t" style="left:165.5px;top:243.79px;font-size:7px;line-height:7px;color:#111;">Gehalt/Lohn</div>
<div class="r" style="left:138px;top:259.48px;width:6px;height:1px;background:#bbb;"></div>
<div class="r" style="left:144px;top:254.98000000000002px;width:9px;height:9px;background:#1a5fb4;border-radius:1.5px;"></div>
<svg class="r" style="left:144px;top:254.98000000000002px;" width="9" height="9" viewBox="0 0 9 9"><path d="M2 4.5 L3.7 6.2 L7 2.8" stroke="#fff" stroke-width="1" fill="none"/></svg>
<div class="r" style="left:152.5px;top:254.48000000000002px;width:10px;height:10px;background:#cc80ee;"></div>
<div class="t" style="left:165.5px;top:256.12px;font-size:7px;line-height:7px;color:#111;">Gesundheit</div>
<div class="r" style="left:138px;top:271.81px;width:6px;height:1px;background:#bbb;"></div>
<div class="r" style="left:144px;top:267.31px;width:9px;height:9px;background:#1a5fb4;border-radius:1.5px;"></div>
<svg class="r" style="left:144px;top:267.31px;" width="9" height="9" viewBox="0 0 9 9"><path d="M2 4.5 L3.7 6.2 L7 2.8" stroke="#fff" stroke-width="1" fill="none"/></svg>
<div class="r" style="left:152.5px;top:266.81px;width:10px;height:10px;background:#44d0a8;"></div>
<div class="t" style="left:165.5px;top:268.45px;font-size:7px;line-height:7px;color:#111;">Handy/Telefon</div>
<div class="r" style="left:138px;top:284.14px;width:6px;height:1px;background:#bbb;"></div>
<div class="r" style="left:144px;top:279.64px;width:9px;height:9px;background:#1a5fb4;border-radius:1.5px;"></div>
<svg class="r" style="left:144px;top:279.64px;" width="9" height="9" viewBox="0 0 9 9"><path d="M2 4.5 L3.7 6.2 L7 2.8" stroke="#fff" stroke-width="1" fill="none"/></svg>
<div class="r" style="left:152.5px;top:279.14px;width:10px;height:10px;background:#e86848;"></div>
<div class="t" style="left:165.5px;top:280.78px;font-size:7px;line-height:7px;color:#111;">Haushalt</div>
<div class="r" style="left:138px;top:296.47px;width:6px;height:1px;background:#bbb;"></div>
<div class="r" style="left:144px;top:291.97px;width:9px;height:9px;background:#1a5fb4;border-radius:1.5px;"></div>
<svg class="r" style="left:144px;top:291.97px;" width="9" height="9" viewBox="0 0 9 9"><path d="M2 4.5 L3.7 6.2 L7 2.8" stroke="#fff" stroke-width="1" fill="none"/></svg>
<div class="r" style="left:152.5px;top:291.47px;width:10px;height:10px;background:#90f0b0;"></div>
<div class="t" style="left:165.5px;top:293.11px;font-size:7px;line-height:7px;color:#111;">Kfz</div>
<div class="r" style="left:150px;top:299.8px;width:9px;height:9px;border-left:1px dotted #888;border-bottom:1px dotted #888;"></div>
<div class="r" style="left:156px;top:304.3px;width:9px;height:9px;background:#1a5fb4;border-radius:1.5px;"></div>
<svg class="r" style="left:156px;top:304.3px;" width="9" height="9" viewBox="0 0 9 9"><path d="M2 4.5 L3.7 6.2 L7 2.8" stroke="#fff" stroke-width="1" fill="none"/></svg>
<div class="r" style="left:164.5px;top:303.8px;width:10px;height:10px;background:#10f050;"></div>
<div class="t" style="left:177.5px;top:305.44px;font-size:7px;line-height:7px;color:#111;">Tanken</div>
<div class="r" style="left:138px;top:321.13px;width:6px;height:1px;background:#bbb;"></div>
<div class="r" style="left:144px;top:316.63px;width:9px;height:9px;background:#1a5fb4;border-radius:1.5px;"></div>
<svg class="r" style="left:144px;top:316.63px;" width="9" height="9" viewBox="0 0 9 9"><path d="M2 4.5 L3.7 6.2 L7 2.8" stroke="#fff" stroke-width="1" fill="none"/></svg>
<div class="r" style="left:152.5px;top:316.13px;width:10px;height:10px;background:#e0a0b8;"></div>
<div class="t" style="left:165.5px;top:317.77px;font-size:7px;line-height:7px;color:#111;">Kinder</div>
<div class="r" style="left:138px;top:333.46000000000004px;width:6px;height:1px;background:#bbb;"></div>
<div class="r" style="left:144px;top:328.96000000000004px;width:9px;height:9px;background:#1a5fb4;border-radius:1.5px;"></div>
<svg class="r" style="left:144px;top:328.96000000000004px;" width="9" height="9" viewBox="0 0 9 9"><path d="M2 4.5 L3.7 6.2 L7 2.8" stroke="#fff" stroke-width="1" fill="none"/></svg>
<div class="r" style="left:152.5px;top:328.46000000000004px;width:10px;height:10px;background:#189868;"></div>
<div class="t" style="left:165.5px;top:330.10px;font-size:7px;line-height:7px;color:#111;">Kleidung</div>
<div class="r" style="left:138px;top:345.78999999999996px;width:6px;height:1px;background:#bbb;"></div>
<div class="r" style="left:144px;top:341.28999999999996px;width:9px;height:9px;background:#1a5fb4;border-radius:1.5px;"></div>
<svg class="r" style="left:144px;top:341.28999999999996px;" width="9" height="9" viewBox="0 0 9 9"><path d="M2 4.5 L3.7 6.2 L7 2.8" stroke="#fff" stroke-width="1" fill="none"/></svg>
<div class="r" style="left:152.5px;top:340.78999999999996px;width:10px;height:10px;background:#2010d0;"></div>
<div class="t" style="left:165.5px;top:342.43px;font-size:7px;line-height:7px;color:#111;">Kredit</div>
<div class="r" style="left:138px;top:358.12px;width:6px;height:1px;background:#bbb;"></div>
<div class="r" style="left:144px;top:353.62px;width:9px;height:9px;background:#1a5fb4;border-radius:1.5px;"></div>
<svg class="r" style="left:144px;top:353.62px;" width="9" height="9" viewBox="0 0 9 9"><path d="M2 4.5 L3.7 6.2 L7 2.8" stroke="#fff" stroke-width="1" fill="none"/></svg>
<div class="r" style="left:152.5px;top:353.12px;width:10px;height:10px;background:#60aa70;"></div>
<div class="t" style="left:165.5px;top:354.76px;font-size:7px;line-height:7px;color:#111;">Lebensmittel</div>
<div class="r" style="left:138px;top:370.45px;width:6px;height:1px;background:#bbb;"></div>
<div class="r" style="left:144px;top:365.95px;width:9px;height:9px;background:#1a5fb4;border-radius:1.5px;"></div>
<svg class="r" style="left:144px;top:365.95px;" width="9" height="9" viewBox="0 0 9 9"><path d="M2 4.5 L3.7 6.2 L7 2.8" stroke="#fff" stroke-width="1" fill="none"/></svg>
<div class="r" style="left:152.5px;top:365.45px;width:10px;height:10px;background:#a0f0d8;"></div>
<div class="t" style="left:165.5px;top:367.09px;font-size:7px;line-height:7px;color:#111;">Miete</div>
<div class="r" style="left:138px;top:382.78px;width:6px;height:1px;background:#bbb;"></div>
<div class="r" style="left:144px;top:378.28px;width:9px;height:9px;background:#1a5fb4;border-radius:1.5px;"></div>
<svg class="r" style="left:144px;top:378.28px;" width="9" height="9" viewBox="0 0 9 9"><path d="M2 4.5 L3.7 6.2 L7 2.8" stroke="#fff" stroke-width="1" fill="none"/></svg>
<div class="r" style="left:152.5px;top:377.78px;width:10px;height:10px;background:#a06818;"></div>
<div class="t" style="left:165.5px;top:379.42px;font-size:7px;line-height:7px;color:#111;">Nebenverdienst</div>
<div class="r" style="left:138px;top:395.11px;width:6px;height:1px;background:#bbb;"></div>
<div class="r" style="left:144px;top:390.61px;width:9px;height:9px;background:#1a5fb4;border-radius:1.5px;"></div>
<svg class="r" style="left:144px;top:390.61px;" width="9" height="9" viewBox="0 0 9 9"><path d="M2 4.5 L3.7 6.2 L7 2.8" stroke="#fff" stroke-width="1" fill="none"/></svg>
<div class="r" style="left:152.5px;top:390.11px;width:10px;height:10px;background:#b8a028;"></div>
<div class="t" style="left:165.5px;top:391.75px;font-size:7px;line-height:7px;color:#111;">Sonstiges</div>
<div class="r" style="left:138px;top:407.44px;width:6px;height:1px;background:#bbb;"></div>
<div class="r" style="left:144px;top:402.94px;width:9px;height:9px;background:#1a5fb4;border-radius:1.5px;"></div>
<svg class="r" style="left:144px;top:402.94px;" width="9" height="9" viewBox="0 0 9 9"><path d="M2 4.5 L3.7 6.2 L7 2.8" stroke="#fff" stroke-width="1" fill="none"/></svg>
<div class="r" style="left:152.5px;top:402.44px;width:10px;height:10px;background:#a87838;"></div>
<div class="t" style="left:165.5px;top:404.08px;font-size:7px;line-height:7px;color:#111;">Sparen</div>
<div class="r" style="left:138px;top:419.77px;width:6px;height:1px;background:#bbb;"></div>
<div class="r" style="left:144px;top:415.27px;width:9px;height:9px;background:#1a5fb4;border-radius:1.5px;"></div>
<svg class="r" style="left:144px;top:415.27px;" width="9" height="9" viewBox="0 0 9 9"><path d="M2 4.5 L3.7 6.2 L7 2.8" stroke="#fff" stroke-width="1" fill="none"/></svg>
<div class="r" style="left:152.5px;top:414.77px;width:10px;height:10px;background:#58a8c0;"></div>
<div class="t" style="left:165.5px;top:416.41px;font-size:7px;line-height:7px;color:#111;">Transferleistungen</div>
<div class="r" style="left:138px;top:432.1px;width:6px;height:1px;background:#bbb;"></div>
<div class="r" style="left:144px;top:427.6px;width:9px;height:9px;background:#1a5fb4;border-radius:1.5px;"></div>
<svg class="r" style="left:144px;top:427.6px;" width="9" height="9" viewBox="0 0 9 9"><path d="M2 4.5 L3.7 6.2 L7 2.8" stroke="#fff" stroke-width="1" fill="none"/></svg>
<div class="r" style="left:152.5px;top:427.1px;width:10px;height:10px;background:#18e070;"></div>
<div class="t" style="left:165.5px;top:428.74px;font-size:7px;line-height:7px;color:#111;">Urlaub</div>
<div class="r" style="left:135px;top:294px;width:6px;height:6px;background:#fff;border:1px solid #999;"></div>
<div class="r" style="left:136.5px;top:296.6px;width:3px;height:0.9px;background:#555;"></div>
</div>
<div class="r" style="left:247px;top:178px;width:685px;height:260.8px;background:#fff;border:1px solid #6a6a6a;"></div>
<div class="t" style="left:439.5px;width:300px;text-align:center;top:184.98px;font-size:9px;line-height:9px;color:#111;font-weight:bold;">Gruppentrichter | Ausgaben | Januar 2026 | 3 229,72 €</div>
<svg class="r" style="left:380px;top:200px;" width="320" height="240" viewBox="0 0 320 240"><defs><linearGradient id="g0" x1="0" x2="1" y1="0" y2="0"><stop offset="0" stop-color="#a1c1b7"/><stop offset="0.45" stop-color="#a8c8be"/><stop offset="1" stop-color="#a1c1b7"/></linearGradient><linearGradient id="g1" x1="0" x2="1" y1="0" y2="0"><stop offset="0" stop-color="#86af92"/><stop offset="0.45" stop-color="#90b99c"/><stop offset="1" stop-color="#86af92"/></linearGradient><linearGradient id="g2" x1="0" x2="1" y1="0" y2="0"><stop offset="0" stop-color="#dab6c6"/><stop offset="0.45" stop-color="#e4c4d2"/><stop offset="1" stop-color="#dab6c6"/></linearGradient><linearGradient id="g3" x1="0" x2="1" y1="0" y2="0"><stop offset="0" stop-color="#b69870"/><stop offset="0.45" stop-color="#c3a57c"/><stop offset="1" stop-color="#b69870"/></linearGradient><linearGradient id="g4" x1="0" x2="1" y1="0" y2="0"><stop offset="0" stop-color="#8bcfa6"/><stop offset="0.45" stop-color="#9cdcb6"/><stop offset="1" stop-color="#8bcfa6"/></linearGradient><linearGradient id="g5" x1="0" x2="1" y1="0" y2="0"><stop offset="0" stop-color="#dcdce6"/><stop offset="0.45" stop-color="#ececf2"/><stop offset="1" stop-color="#dcdce6"/></linearGradient><linearGradient id="g6" x1="0" x2="1" y1="0" y2="0"><stop offset="0" stop-color="#66ae94"/><stop offset="0.45" stop-color="#78bca4"/><stop offset="1" stop-color="#66ae94"/></linearGradient><linearGradient id="g7" x1="0" x2="1" y1="0" y2="0"><stop offset="0" stop-color="#6c94c8"/><stop offset="0.45" stop-color="#80a6d6"/><stop offset="1" stop-color="#6c94c8"/></linearGradient><linearGradient id="g8" x1="0" x2="1" y1="0" y2="0"><stop offset="0" stop-color="#dedcef"/><stop offset="0.45" stop-color="#ecebf6"/><stop offset="1" stop-color="#dedcef"/></linearGradient></defs><path d="M97,210 L153,210 L152,213 A27,8.5 0 0 1 98,213 Z" fill="url(#g8)"/><path d="M152,213 A27,8.5 0 0 1 98,213" fill="none" stroke="#dedcef" stroke-width="0.8" opacity="0.8"/><path d="M95.5,202 L154.5,202 L153,210 A28,9.5 0 0 1 97,210 Z" fill="url(#g7)"/><path d="M153,210 A28,9.5 0 0 1 97,210" fill="none" stroke="#6c94c8" stroke-width="0.8" opacity="0.8"/><path d="M94,194 L156,194 L154.5,202 A29.5,9.5 0 0 1 95.5,202 Z" fill="url(#g6)"/><path d="M154.5,202 A29.5,9.5 0 0 1 95.5,202" fill="none" stroke="#66ae94" stroke-width="0.8" opacity="0.8"/><path d="M94,186 L156,186 L156,194 A31,7.5 0 0 1 94,194 Z" fill="url(#g5)"/><path d="M156,194 A31,7.5 0 0 1 94,194" fill="none" stroke="#dcdce6" stroke-width="0.8" opacity="0.8"/><path d="M88,178 L162,178 L156,186 A31,6.5 0 0 1 94,186 Z" fill="url(#g4)"/><path d="M156,186 A31,6.5 0 0 1 94,186" fill="none" stroke="#8bcfa6" stroke-width="0.8" opacity="0.8"/><path d="M83,157 L167,157 L162,178 A37,7 0 0 1 88,178 Z" fill="url(#g3)"/><path d="M162,178 A37,7 0 0 1 88,178" fill="none" stroke="#b69870" stroke-width="0.8" opacity="0.8"/><path d="M66.5,143 L183.5,143 L167,157 A42,10.5 0 0 1 83,157 Z" fill="url(#g2)"/><path d="M167,157 A42,10.5 0 0 1 83,157" fill="none" stroke="#dab6c6" stroke-width="0.8" opacity="0.8"/><path d="M18.5,98 L231.5,98 L183.5,143 A58.5,11 0 0 1 66.5,143 Z" fill="url(#g1)"/><path d="M183.5,143 A58.5,11 0 0 1 66.5,143" fill="none" stroke="#86af92" stroke-width="0.8" opacity="0.8"/><path d="M12.5,12.5 L237.5,12.5 L231.5,98 A106.5,20 0 0 1 18.5,98 Z" fill="url(#g0)"/><path d="M231.5,98 A106.5,20 0 0 1 18.5,98" fill="none" stroke="#a1c1b7" stroke-width="0.8" opacity="0.8"/><path d="M115,137.5 L138,137.5" stroke="#5cc070" stroke-width="0.9"/><path d="M135,159 L173,157" stroke="#e0a8c4" stroke-width="0.9"/><path d="M121,176.3 L185.5,167" stroke="#c89848" stroke-width="0.9"/><path d="M122,189.39999999999998 L189,177.5" stroke="#80e0a8" stroke-width="0.9"/><path d="M122,198.39999999999998 L194,187.5" stroke="#e4e4f0" stroke-width="0.9"/><path d="M122,207.39999999999998 L192,197.5" stroke="#30a080" stroke-width="0.9"/><path d="M122.5,215.7 L195,206.5" stroke="#3070b8" stroke-width="0.9"/><path d="M138,218.5 L197,217" stroke="#dcdcf0" stroke-width="0.9"/><path d="M12.5,12.900000000000006 H237.5" stroke="#86aca0" stroke-width="0.9"/></svg>
<div class="r" style="left:492px;top:263px;width:39px;height:10px;background:#fff;border:1px solid #4a4a4a;"></div>
<div class="t" style="left:411.5px;width:200px;text-align:center;top:265.08px;font-size:6.5px;line-height:6.5px;color:#222;">Miete: 37%</div>
<div class="r" style="left:518px;top:332.5px;width:63px;height:10.0px;background:#fff;border:1px solid #4a4a4a;"></div>
<div class="t" style="left:449.5px;width:200px;text-align:center;top:334.58px;font-size:6.5px;line-height:6.5px;color:#222;">Lebensmittel: 20%</div>
<div class="r" style="left:553px;top:352.3px;width:41.5px;height:9.899999999999977px;background:#fff;border:1px solid #4a4a4a;"></div>
<div class="t" style="left:473.75px;width:200px;text-align:center;top:354.33px;font-size:6.5px;line-height:6.5px;color:#222;">Kinder: 11%</div>
<div class="r" style="left:565.5px;top:362.5px;width:39.200000000000045px;height:9.199999999999989px;background:#fff;border:1px solid #4a4a4a;"></div>
<div class="t" style="left:485.1px;width:200px;text-align:center;top:364.18px;font-size:6.5px;line-height:6.5px;color:#222;">Sparen: 9%</div>
<div class="r" style="left:569px;top:373.4px;width:29px;height:8.600000000000023px;background:#fff;border:1px solid #4a4a4a;"></div>
<div class="t" style="left:483.5px;width:200px;text-align:center;top:374.78px;font-size:6.5px;line-height:6.5px;color:#222;">Kfz: 6%</div>
<div class="r" style="left:574px;top:383.6px;width:37px;height:8.5px;background:#fff;border:1px solid #4a4a4a;"></div>
<div class="t" style="left:492.5px;width:200px;text-align:center;top:384.93px;font-size:6.5px;line-height:6.5px;color:#222;">Freizeit: 5%</div>
<div class="r" style="left:572px;top:393.1px;width:46.299999999999955px;height:9.199999999999989px;background:#fff;border:1px solid #4a4a4a;"></div>
<div class="t" style="left:495.15px;width:200px;text-align:center;top:394.78px;font-size:6.5px;line-height:6.5px;color:#222;">Kleidung: 5%</div>
<div class="r" style="left:574.7px;top:402.3px;width:64.0px;height:9.199999999999989px;background:#fff;border:1px solid #4a4a4a;"></div>
<div class="t" style="left:506.70000000000005px;width:200px;text-align:center;top:403.98px;font-size:6.5px;line-height:6.5px;color:#222;">Betriebskosten: 4%</div>
<div class="r" style="left:576.8px;top:412.6px;width:112.30000000000007px;height:9.5px;background:#fff;border:1px solid #4a4a4a;"></div>
<div class="t" style="left:532.95px;width:200px;text-align:center;top:414.43px;font-size:6.5px;line-height:6.5px;color:#222;">Zusammengefasste Gruppen: 2%</div>
<div class="r" style="left:762px;top:202.3px;width:163px;height:229.5px;background:#fffcf3;border:1px solid #4a4a6a;"></div>
<div class="r" style="left:765.6px;top:206.5px;width:7.8px;height:7.6px;background:#ecebf7;"></div>
<div class="t" style="left:774.5px;top:207.28px;font-size:6.3px;line-height:6.3px;color:#222;">Freizeit</div>
<div class="r" style="left:765.6px;top:218.33px;width:7.8px;height:7.6px;background:#e8b8cc;"></div>
<div class="t" style="left:774.5px;top:219.11px;font-size:6.3px;line-height:6.3px;color:#222;">Kinder</div>
<div class="r" style="left:765.6px;top:230.16px;width:7.8px;height:7.6px;background:#5fb096;"></div>
<div class="t" style="left:774.5px;top:230.94px;font-size:6.3px;line-height:6.3px;color:#222;">Kleidung</div>
<div class="r" style="left:765.6px;top:241.99px;width:7.8px;height:7.6px;background:#a8f2c4;"></div>
<div class="t" style="left:774.5px;top:242.77px;font-size:6.3px;line-height:6.3px;color:#222;">Kfz</div>
<div class="r" style="left:765.6px;top:253.82px;width:7.8px;height:7.6px;background:#8fc096;"></div>
<div class="t" style="left:774.5px;top:254.60px;font-size:6.3px;line-height:6.3px;color:#222;">Lebensmittel</div>
<div class="r" style="left:765.6px;top:265.65px;width:7.8px;height:7.6px;background:#5e8fcc;"></div>
<div class="t" style="left:774.5px;top:266.43px;font-size:6.3px;line-height:6.3px;color:#222;">Betriebskosten</div>
<div class="r" style="left:765.6px;top:277.48px;width:7.8px;height:7.6px;background:#c4f0e2;"></div>
<div class="t" style="left:774.5px;top:278.26px;font-size:6.3px;line-height:6.3px;color:#222;">Miete</div>
<div class="r" style="left:765.6px;top:289.31px;width:7.8px;height:7.6px;background:#c09c6c;"></div>
<div class="t" style="left:774.5px;top:290.09px;font-size:6.3px;line-height:6.3px;color:#222;">Sparen</div>
<div class="r" style="left:765.6px;top:301.14px;width:7.8px;height:7.6px;background:#f0eef8;"></div>
<div class="t" style="left:774.5px;top:301.92px;font-size:6.3px;line-height:6.3px;color:#222;">Zusammengefasste Gruppen</div>
<div class="r" style="left:133px;top:434.8px;width:185px;height:8.7px;background:#fdfbe2;z-index:2;"><div class="t" style="left:2.5px;top:1.5px;font-size:5.7px;line-height:6px;color:#333;">Linke Maustaste gedrückt halten um das Diagramm zu drehen</div></div>
<div class="r" style="left:133px;top:443px;width:95px;height:61px;background:#f4f4f4;border:1px solid #e2e2e2;"></div>
<div class="r" style="left:133px;top:494px;width:95px;height:10px;background:#05769e;"></div>
<div class="t" style="left:80.5px;width:200px;text-align:center;top:495.94px;font-size:7px;line-height:7px;color:#fff;">Folgende Werte anzeige</div>
<div class="r" style="left:143px;top:457px;width:9px;height:9px;background:#fff;border:1px solid #666;border-radius:50%;"></div>
<div class="t" style="left:155px;top:458.14px;font-size:7px;line-height:7px;color:#222;">Einnahmen</div>
<div class="r" style="left:143px;top:475px;width:9px;height:9px;background:#1a5fb4;border-radius:50%;"></div>
<div class="r" style="left:145.8px;top:477.8px;width:3.4px;height:3.4px;background:#fff;border-radius:50%;"></div>
<div class="t" style="left:155px;top:476.14px;font-size:7px;line-height:7px;color:#222;">Ausgaben</div>
<div class="r" style="left:233px;top:443px;width:109px;height:61px;background:#f4f4f4;border:1px solid #e2e2e2;"></div>
<div class="r" style="left:233px;top:494px;width:109px;height:10px;background:#05769e;"></div>
<div class="t" style="left:187.5px;width:200px;text-align:center;top:495.94px;font-size:7px;line-height:7px;color:#fff;">Darstellung</div>
<div class="r" style="left:238px;top:449px;width:8px;height:8px;background:#1a5fb4;border-radius:1.5px;"></div>
<svg class="r" style="left:238px;top:449px;" width="8" height="8" viewBox="0 0 8 8"><path d="M1.8 4 L3.3 5.6 L6.3 2.3" stroke="#fff" stroke-width="1" fill="none"/></svg>
<div class="t" style="left:250px;top:449.64px;font-size:7px;line-height:7px;color:#222;">Werte in %</div>
<div class="r" style="left:238px;top:466px;width:8px;height:8px;background:#1a5fb4;border-radius:1.5px;"></div>
<svg class="r" style="left:238px;top:466px;" width="8" height="8" viewBox="0 0 8 8"><path d="M1.8 4 L3.3 5.6 L6.3 2.3" stroke="#fff" stroke-width="1" fill="none"/></svg>
<div class="t" style="left:250px;top:466.64px;font-size:7px;line-height:7px;color:#222;">Alle Werte einblenden</div>
<div class="r" style="left:238px;top:483.5px;width:8px;height:8px;background:#1a5fb4;border-radius:1.5px;"></div>
<svg class="r" style="left:238px;top:483.5px;" width="8" height="8" viewBox="0 0 8 8"><path d="M1.8 4 L3.3 5.6 L6.3 2.3" stroke="#fff" stroke-width="1" fill="none"/></svg>
<div class="t" style="left:250px;top:484.14px;font-size:7px;line-height:7px;color:#222;">Untergruppen separat</div>
<div class="r" style="left:867.5px;top:450px;width:64.5px;height:56px;background:#f4f4f4;border:1px solid #e2e2e2;"></div>
<div class="r" style="left:867.5px;top:496px;width:64.5px;height:10px;background:#05769e;"></div>
<div class="t" style="left:799.75px;width:200px;text-align:center;top:497.94px;font-size:7px;line-height:7px;color:#fff;">Beschreibung</div>
<div class="r" style="left:870px;top:457.5px;width:8px;height:8px;background:#1a5fb4;border-radius:1.5px;"></div>
<svg class="r" style="left:870px;top:457.5px;" width="8" height="8" viewBox="0 0 8 8"><path d="M1.8 4 L3.3 5.6 L6.3 2.3" stroke="#fff" stroke-width="1" fill="none"/></svg>
<div class="t" style="left:882px;top:458.14px;font-size:7px;line-height:7px;color:#222;">Titel</div>
<div class="r" style="left:870px;top:470px;width:8px;height:8px;background:#1a5fb4;border-radius:1.5px;"></div>
<svg class="r" style="left:870px;top:470px;" width="8" height="8" viewBox="0 0 8 8"><path d="M1.8 4 L3.3 5.6 L6.3 2.3" stroke="#fff" stroke-width="1" fill="none"/></svg>
<div class="t" style="left:882px;top:470.64px;font-size:7px;line-height:7px;color:#222;">Y-Axe</div>
<div class="r" style="left:870px;top:483px;width:8px;height:8px;background:#1a5fb4;border-radius:1.5px;"></div>
<svg class="r" style="left:870px;top:483px;" width="8" height="8" viewBox="0 0 8 8"><path d="M1.8 4 L3.3 5.6 L6.3 2.3" stroke="#fff" stroke-width="1" fill="none"/></svg>
<div class="t" style="left:882px;top:483.64px;font-size:7px;line-height:7px;color:#222;">X-Achse</div>
<div class="r" style="left:867.5px;top:511.5px;width:64.5px;height:24.0px;background:#f4f4f4;border:1px solid #e2e2e2;"></div>
<div class="r" style="left:867.5px;top:525.5px;width:64.5px;height:10px;background:#05769e;"></div>
<div class="t" style="left:799.75px;width:200px;text-align:center;top:527.44px;font-size:7px;line-height:7px;color:#fff;">Sonstiges</div>
<div class="r" style="left:870px;top:514.5px;width:8px;height:8px;background:#1a5fb4;border-radius:1.5px;"></div>
<svg class="r" style="left:870px;top:514.5px;" width="8" height="8" viewBox="0 0 8 8"><path d="M1.8 4 L3.3 5.6 L6.3 2.3" stroke="#fff" stroke-width="1" fill="none"/></svg>
<div class="t" style="left:882px;top:515.14px;font-size:7px;line-height:7px;color:#222;">Legende</div>
<div class="r" style="left:342px;top:439px;width:518px;height:69px;background:#f7f7f7;"></div>
<div class="r" style="left:132px;top:508px;width:82px;height:27.5px;background:#f0f0f0;border-right:1px solid #e2e2e2;border-bottom:1px solid #e6e6e6;"></div>
<svg class="r" style="left:134.2px;top:517.5px;" width="10" height="9" viewBox="0 0 10 9"><rect x="0" y="2" width="2" height="6" fill="#222"/><rect x="3" y="3.5" width="2" height="4.5" fill="#222"/><rect x="6" y="0.5" width="2" height="7.5" fill="#222"/></svg>
<div class="t" style="left:147px;top:519.04px;font-size:6.8px;line-height:6.8px;color:#222;">E/A Balkendiagramm</div>
<div class="r" style="left:214px;top:508px;width:81px;height:27.5px;background:#f0f0f0;border-right:1px solid #e2e2e2;border-bottom:1px solid #e6e6e6;"></div>
<svg class="r" style="left:216.2px;top:517.5px;" width="10" height="9" viewBox="0 0 10 9"><path d="M0 7 L3 3 L5 6 L9 1 M0 3 L3 6 L5 3 L9 7" stroke="#333" stroke-width="0.9" fill="none"/></svg>
<div class="t" style="left:229px;top:519.04px;font-size:6.8px;line-height:6.8px;color:#222;">E/A Liniendiagramm</div>
<div class="r" style="left:295px;top:508px;width:112px;height:27.5px;background:#f0f0f0;border-right:1px solid #e2e2e2;border-bottom:1px solid #e6e6e6;"></div>
<svg class="r" style="left:297.2px;top:517.5px;" width="10" height="9" viewBox="0 0 10 9"><rect x="0" y="0" width="3" height="2" fill="#222"/><rect x="0" y="3" width="5" height="2" fill="#222"/><rect x="0" y="6" width="8" height="2" fill="#222"/></svg>
<div class="t" style="left:310px;top:519.04px;font-size:6.8px;line-height:6.8px;color:#222;">Gruppen gesamt (Balkendiag.)</div>
<div class="r" style="left:407px;top:508px;width:113px;height:27.5px;background:#f0f0f0;border-right:1px solid #e2e2e2;border-bottom:1px solid #e6e6e6;"></div>
<svg class="r" style="left:409.2px;top:517.5px;" width="10" height="9" viewBox="0 0 10 9"><rect x="0" y="5" width="2" height="3" fill="#222"/><rect x="3" y="3" width="2" height="5" fill="#222"/><rect x="6" y="0" width="2" height="8" fill="#222"/></svg>
<div class="t" style="left:422px;top:519.04px;font-size:6.8px;line-height:6.8px;color:#222;">Gruppen einzeln (Balkendiag.)</div>
<div class="r" style="left:520px;top:508px;width:109px;height:27.5px;background:#f0f0f0;border-right:1px solid #e2e2e2;border-bottom:1px solid #e6e6e6;"></div>
<svg class="r" style="left:522.2px;top:517.5px;" width="10" height="9" viewBox="0 0 10 9"><path d="M0 7 L3 3 L5 6 L9 1 M0 3 L3 6 L5 3 L9 7" stroke="#333" stroke-width="0.9" fill="none"/></svg>
<div class="t" style="left:535px;top:519.04px;font-size:6.8px;line-height:6.8px;color:#222;">Gruppen einzeln (Liniendiag.)</div>
<div class="r" style="left:629px;top:508px;width:107px;height:27.5px;background:#f0f0f0;border-right:1px solid #e2e2e2;border-bottom:1px solid #e6e6e6;"></div>
<svg class="r" style="left:631.2px;top:517.5px;" width="10" height="9" viewBox="0 0 10 9"><path d="M4.5 1.2 A3.9 3.9 0 1 0 8.4 5.1" fill="none" stroke="#222" stroke-width="1.1"/><path d="M5.6 0.2 V4 H9.4 A3.8 3.8 0 0 0 5.6 0.2 Z" fill="#222"/></svg>
<div class="t" style="left:644px;top:519.04px;font-size:6.8px;line-height:6.8px;color:#222;">Gruppen gesamt (Kreisdiag.)</div>
<div class="r" style="left:736px;top:508px;width:69px;height:30px;background:#fafafa;"></div>
<svg class="r" style="left:739px;top:515.5px;" width="11" height="11" viewBox="0 0 11 11"><path d="M0.5 0.5 H10.5 L6.5 5.5 V10.5 L4.5 9 V5.5 Z" fill="none" stroke="#222" stroke-width="1"/></svg>
<div class="t" style="left:752.5px;top:519.14px;font-size:7px;line-height:7px;color:#222;">Gruppentrichter</div>
<div class="r" style="left:0px;top:545.5px;width:940px;height:19.5px;background:#05769e;"></div>
<div class="r" style="left:0px;top:547.5px;width:174.5px;height:15.5px;background:#f3f3f3;"></div>
<div class="r" style="left:174.5px;top:547.5px;width:684.5px;height:15.5px;background:linear-gradient(#e8e8e8,#dedede);border-left:1px solid #cfcfcf;"></div>
<div class="r" style="left:860px;top:547.5px;width:78px;height:15.5px;background:#f8f8f8;"></div>
<div class="t" style="left:5px;top:552.64px;font-size:7px;line-height:7px;color:#222;">State:</div>
<div class="t" style="left:42px;top:552.40px;font-size:7.5px;line-height:7.5px;color:#222;">OK</div>
<div class="t" style="left:859.0px;width:80px;text-align:center;top:552.64px;font-size:7px;line-height:7px;color:#222;">15.01.2026</div>
</body></html>
